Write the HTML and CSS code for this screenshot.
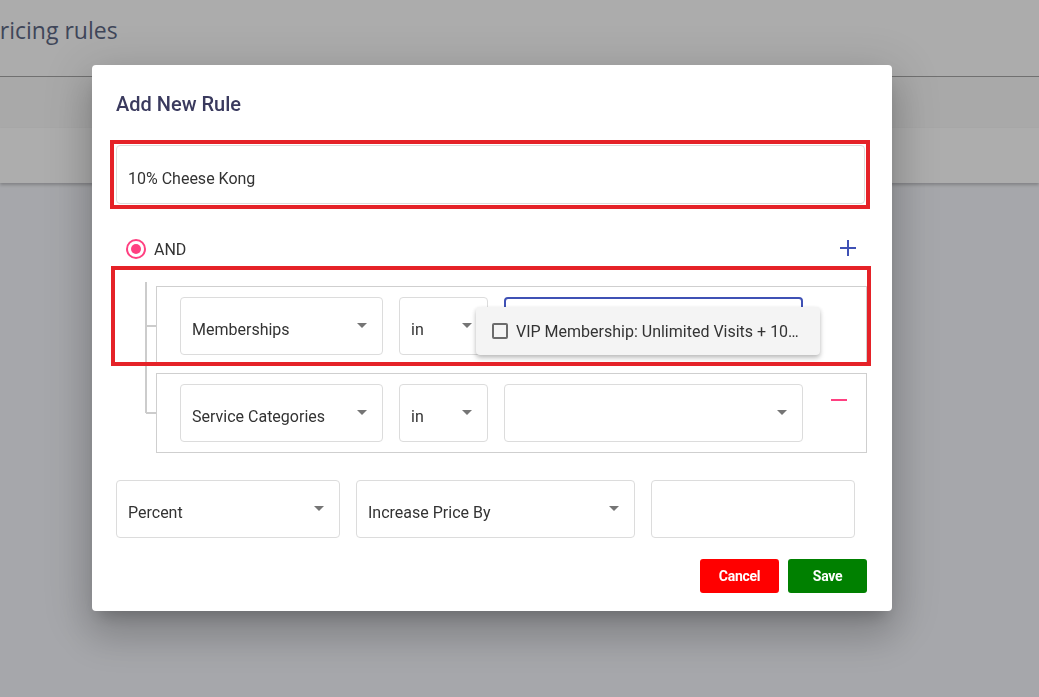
FILE: index.html
```html
<!DOCTYPE html>
<html lang="en">
<head>
<meta charset="utf-8">
<title>Pricing rules</title>
<link rel="stylesheet" href="styles.css">
</head>
<body>
<div class="page">
  <header class="page-header">
    <h1 class="page-title">Pricing rules</h1>
  </header>
  <div class="band band-tabs"></div>
  <div class="band band-toolbar"></div>
</div>

<div class="dialog" role="dialog">
  <h2 class="dialog-title">Add New Rule</h2>

  <div class="name-field">
    <span class="field-text">10% Cheese Kong</span>
  </div>

  <div class="logic-row">
    <span class="radio"><span class="radio-dot"></span></span>
    <span class="logic-label">AND</span>
    <span class="icon-btn plus">
      <svg width="24" height="24" viewBox="0 0 24 24"><path d="M4 12h16M12 4v16" stroke="#3f51b5" stroke-width="2" fill="none"/></svg>
    </span>
  </div>

  <div class="group">
    <div class="rule-row">
      <div class="select f-field"><span class="field-text">Memberships</span><span class="caret"></span></div>
      <div class="select f-op"><span class="field-text">in</span><span class="caret"></span></div>
      <div class="select f-value focused">
        <div class="menu">
          <span class="checkbox"></span>
          <span class="menu-text">VIP Membership: Unlimited Visits + 10…</span>
        </div>
      </div>
    </div>
    <div class="rule-row">
      <div class="select f-field"><span class="field-text">Service Categories</span><span class="caret"></span></div>
      <div class="select f-op"><span class="field-text">in</span><span class="caret"></span></div>
      <div class="select f-value"><span class="field-text"></span><span class="caret"></span></div>
      <span class="icon-btn minus">
        <svg width="24" height="24" viewBox="0 0 24 24"><path d="M4 12h16" stroke="#ff4081" stroke-width="2" fill="none"/></svg>
      </span>
    </div>
  </div>

  <div class="adjust-row">
    <div class="select f-type"><span class="field-text">Percent</span><span class="caret"></span></div>
    <div class="select f-mode"><span class="field-text">Increase Price By</span><span class="caret"></span></div>
    <div class="select f-amount"></div>
  </div>

  <div class="actions">
    <button class="btn btn-cancel">Cancel</button>
    <button class="btn btn-save">Save</button>
  </div>

  <div class="highlight hl-name"></div>
  <div class="highlight hl-row"></div>
</div>
</body>
</html>
```

FILE: styles.css
```css
* { box-sizing: border-box; }

html, body {
  margin: 0;
  padding: 0;
  height: 100%;
}

body {
  background: #a6a7ab;
  font-family: Roboto, "Liberation Sans", Arial, sans-serif;
  color: #333;
  overflow: hidden;
}

.page-header {
  height: 77px;
  background: #acacac;
  border-bottom: 1px solid #707070;
  padding-top: 13px;
}

.page-title {
  margin: 0 0 0 -14px;
  font-family: "Open Sans", "Liberation Sans", sans-serif;
  font-weight: 400;
  font-size: 23px;
  line-height: 34px;
  color: #3f4659;
}

.band-tabs {
  height: 51px;
  background: #a9a9a9;
}

.band-toolbar {
  height: 55px;
  background: #adadad;
  box-shadow: 0 2px 3px rgba(0, 0, 0, 0.22);
}

/* dialog */
.dialog {
  position: fixed;
  left: 92px;
  top: 65px;
  width: 800px;
  background: #fff;
  border-radius: 4px;
  padding: 24px 24px 18px 24px;
  box-shadow: 0 11px 15px -7px rgba(0,0,0,.2), 0 24px 38px 3px rgba(0,0,0,.14), 0 9px 46px 8px rgba(0,0,0,.12);
}

.dialog-title {
  margin: 0;
  font-size: 20px;
  font-weight: 500;
  line-height: 30px;
  color: #3a3a5e;
}

.field-text {
  font-size: 16px;
  line-height: 20px;
  padding-top: 8px;
  color: #333;
  white-space: nowrap;
}

.name-field {
  margin-top: 26px;
  width: 749px;
  height: 59px;
  border: 1px solid #dcdcdc;
  border-radius: 4px;
  display: flex;
  align-items: center;
  padding-left: 11px;
}

.logic-row {
  margin-top: 33px;
  height: 24px;
  display: flex;
  align-items: center;
  padding-left: 10px;
}

.radio {
  width: 20px;
  height: 20px;
  border: 2px solid #ff4081;
  border-radius: 50%;
  display: flex;
  align-items: center;
  justify-content: center;
}

.radio-dot {
  width: 10px;
  height: 10px;
  border-radius: 50%;
  background: #ff4081;
}

.logic-label {
  margin-left: 8px;
  font-size: 16px;
  color: #333;
}

.icon-btn {
  display: flex;
  flex: none;
  width: 24px;
  height: 24px;
}

.plus {
  margin-left: auto;
  margin-right: 8px;
  margin-top: -2px;
}

/* rule group */
.group {
  position: relative;
  margin-top: 21px;
  margin-left: 40px;
  padding-top: 4px;
  display: flex;
  flex-direction: column;
  gap: 7px;
  width: 711px;
}

.group::before {
  content: "";
  position: absolute;
  left: -11px;
  top: 0;
  bottom: 40px;
  width: 2px;
  background: #cccccc;
}

.rule-row {
  position: relative;
  height: 80px;
  border: 1px solid #cfcfcf;
  padding: 10px 23px;
  display: flex;
  align-items: flex-start;
  gap: 16px;
}

.rule-row::before {
  content: "";
  position: absolute;
  left: -11px;
  top: 38px;
  width: 10px;
  height: 2px;
  background: #cccccc;
}

.select {
  position: relative;
  flex: none;
  height: 58px;
  border: 1px solid #dcdcdc;
  border-radius: 4px;
  display: flex;
  align-items: center;
  justify-content: space-between;
  padding: 0 15px 0 11px;
}

.caret {
  width: 0;
  height: 0;
  border-left: 5px solid transparent;
  border-right: 5px solid transparent;
  border-top: 5px solid #757575;
  margin-top: -1px;
}

.f-field { width: 203px; }
.f-op { width: 89px; }
.f-value { width: 299px; }

.focused {
  border: 2px solid #3f51b5;
}

.minus {
  margin-left: 8px;
  margin-top: 4px;
}

.menu {
  position: absolute;
  left: -30px;
  top: 8px;
  width: 344px;
  height: 48px;
  background: #f4f4f4;
  border-radius: 4px;
  box-shadow: 0 2px 4px rgba(0,0,0,.2), 0 4px 6px rgba(0,0,0,.1);
  display: flex;
  align-items: center;
  padding: 0 16px;
  z-index: 2;
}

.checkbox {
  flex: none;
  width: 16px;
  height: 16px;
  border: 2px solid #6b6b6b;
  border-radius: 2px;
}

.menu-text {
  margin-left: 8px;
  font-size: 16px;
  color: #333;
  white-space: nowrap;
}

/* bottom */
.adjust-row {
  margin-top: 27px;
  display: flex;
  gap: 16px;
}

.f-type { width: 224px; }
.f-mode { width: 279px; }
.f-amount { width: 204px; }

.actions {
  margin-top: 21px;
  display: flex;
  justify-content: flex-end;
  gap: 9px;
  padding-right: 1px;
}

.btn {
  width: 79px;
  height: 34px;
  border: none;
  border-radius: 3px;
  color: #fff;
  font-family: Roboto, "Liberation Sans", sans-serif;
  font-weight: 700;
  font-size: 14px;
  letter-spacing: -0.3px;
  cursor: pointer;
}

.btn-cancel { background: #ff0000; }
.btn-save { background: #008000; }

/* red annotation boxes drawn over the dialog */
.highlight {
  position: absolute;
  border: 4px solid #e52228;
  pointer-events: none;
  z-index: 3;
}

.hl-name {
  left: 18px;
  top: 75px;
  width: 760px;
  height: 69px;
}

.hl-row {
  left: 19px;
  top: 201px;
  width: 760px;
  height: 100px;
}
```
